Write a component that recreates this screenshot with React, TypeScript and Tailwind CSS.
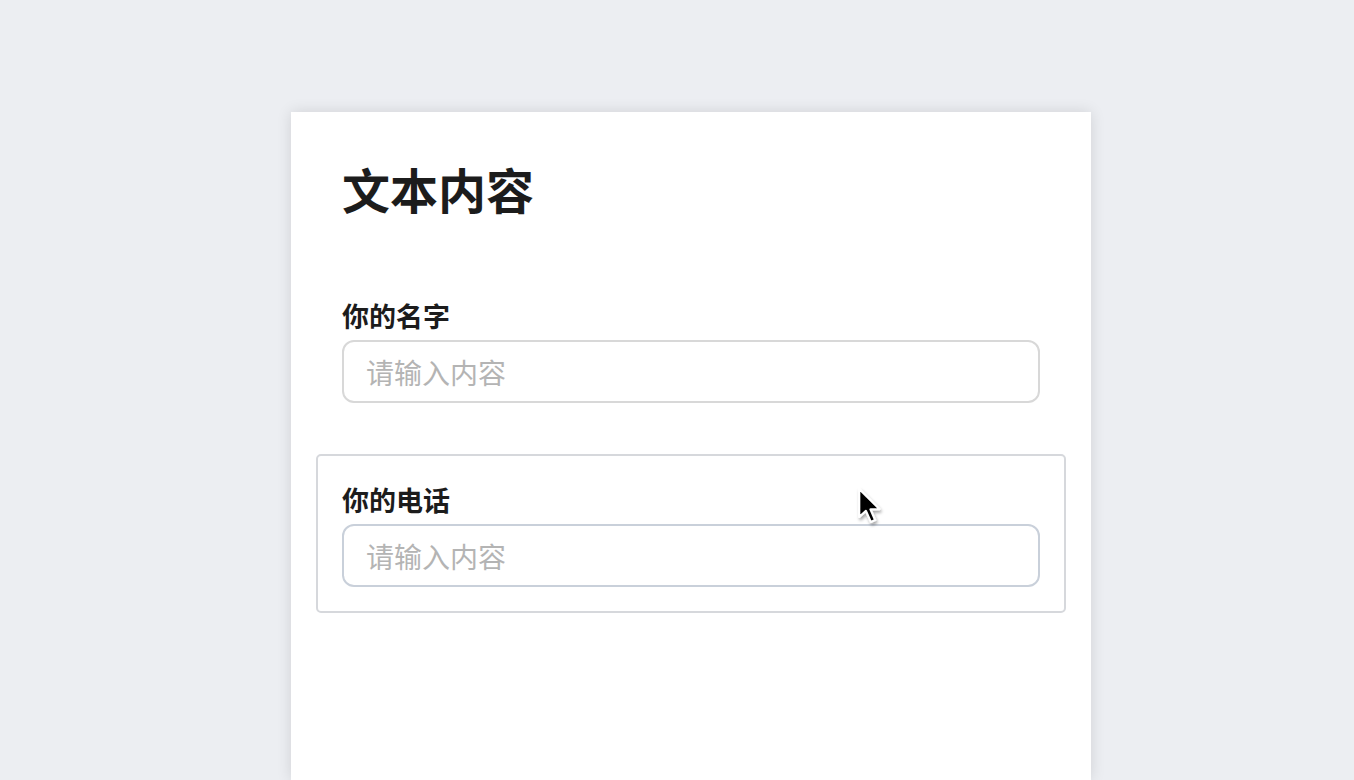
import React from 'react';

const fields = [
  { label: '你的名字', active: false },
  { label: '你的电话', active: true },
];

const Cursor: React.FC = () => (
  <svg
    className="absolute left-[853px] top-[484px] pointer-events-none"
    width="32"
    height="44"
    viewBox="0 0 26 36"
  >
    <defs>
      <filter id="cs" x="-30%" y="-30%" width="160%" height="160%">
        <feDropShadow dx="1" dy="2" stdDeviation="1.2" floodOpacity="0.35" />
      </filter>
    </defs>
    <path
      d="M5 4 L5 27 L10.5 22 L14.5 31 L18 29.5 L14.2 20.8 L21.5 20.5 Z"
      fill="#000"
      stroke="#fff"
      strokeWidth="1.8"
      strokeLinejoin="round"
      filter="url(#cs)"
    />
  </svg>
);

const App: React.FC = () => {
  return (
    <div
      className="relative min-h-screen bg-[#eceef2] pt-[112px] overflow-hidden"
      style={{ fontFamily: '"Noto Sans CJK SC", "Noto Sans", sans-serif' }}
    >
      <div className="ml-[291px] w-[800px] h-[668px] bg-white px-[25px] pt-[47px] shadow-[0_0_14px_rgba(0,0,0,0.12)]">
        {/* Title */}
        <h1 className="px-[26px] text-[48px] leading-[58px] font-bold text-[#1c1c1c]">文本内容</h1>

        <div className="mt-[53px] flex flex-col gap-[25px]">
          {fields.map((f) => (
            <div
              key={f.label}
              className={`rounded-[5px] border-2 px-[24px] pt-[24px] pb-[24px] ${
                f.active ? 'border-[#d6d8dc]' : 'border-transparent'
              }`}
            >
              <label className="block text-[27px] leading-[39px] font-bold text-[#1c1c1c]">{f.label}</label>
              <input
                type="text"
                placeholder="请输入内容"
                className={`mt-[5px] block w-full h-[63px] rounded-[12px] border-2 bg-white px-[22px] text-[28px] outline-none placeholder:text-[#b4b4b4] ${
                  f.active ? 'border-[#c9d0da]' : 'border-[#d8d8d8]'
                }`}
              />
            </div>
          ))}
        </div>
      </div>
      <Cursor />
    </div>
  );
};

export default App;
